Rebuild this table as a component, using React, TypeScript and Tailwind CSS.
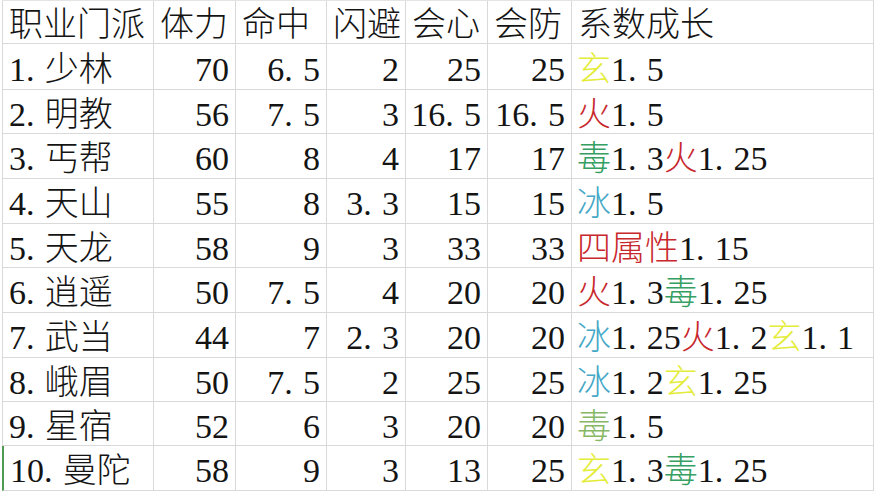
type Seg = { t: string; c?: string };

const YELLOW = "text-[#e4ec3a]";
const RED = "text-[#c8282d]";
const GREEN = "text-[#35a062]";
const LIGHTGREEN = "text-[#86b866]";
const CYAN = "text-[#45a8c8]";

const rows: { name: string; vals: string[]; growth: Seg[] }[] = [
  { name: "1.少林", vals: ["70", "6.5", "2", "25", "25"], growth: [{ t: "玄", c: YELLOW }, { t: "1.5" }] },
  { name: "2.明教", vals: ["56", "7.5", "3", "16.5", "16.5"], growth: [{ t: "火", c: RED }, { t: "1.5" }] },
  {
    name: "3.丐帮",
    vals: ["60", "8", "4", "17", "17"],
    growth: [{ t: "毒", c: GREEN }, { t: "1.3" }, { t: "火", c: RED }, { t: "1.25" }],
  },
  { name: "4.天山", vals: ["55", "8", "3.3", "15", "15"], growth: [{ t: "冰", c: CYAN }, { t: "1.5" }] },
  { name: "5.天龙", vals: ["58", "9", "3", "33", "33"], growth: [{ t: "四属性", c: RED }, { t: "1.15" }] },
  {
    name: "6.逍遥",
    vals: ["50", "7.5", "4", "20", "20"],
    growth: [{ t: "火", c: RED }, { t: "1.3" }, { t: "毒", c: GREEN }, { t: "1.25" }],
  },
  {
    name: "7.武当",
    vals: ["44", "7", "2.3", "20", "20"],
    growth: [{ t: "冰", c: CYAN }, { t: "1.25" }, { t: "火", c: RED }, { t: "1.2" }, { t: "玄", c: YELLOW }, { t: "1.1" }],
  },
  {
    name: "8.峨眉",
    vals: ["50", "7.5", "2", "25", "25"],
    growth: [{ t: "冰", c: CYAN }, { t: "1.2" }, { t: "玄", c: YELLOW }, { t: "1.25" }],
  },
  { name: "9.星宿", vals: ["52", "6", "3", "20", "20"], growth: [{ t: "毒", c: LIGHTGREEN }, { t: "1.5" }] },
  {
    name: "10.曼陀",
    vals: ["58", "9", "3", "13", "25"],
    growth: [{ t: "玄", c: YELLOW }, { t: "1.3" }, { t: "毒", c: GREEN }, { t: "1.25" }],
  },
];

const headers = ["职业门派", "体力", "命中", "闪避", "会心", "会防", "系数成长"];

// SimSun style: the period takes a half-width cell
function Txt({ s }: { s: string }) {
  const parts = s.split(".");
  return (
    <>
      {parts.map((p, i) => (
        <span key={i}>
          {p}
          {i < parts.length - 1 && <span className="inline-block w-[0.55em]">.</span>}
        </span>
      ))}
    </>
  );
}

const cell = "flex items-center border-r border-b border-[#d9d9d9] pt-[6px] whitespace-nowrap";

export default function App() {
  return (
    <div className="h-[494px] w-[874px] overflow-hidden bg-white pl-[2px] font-['Liberation_Serif','Noto_Sans_CJK_SC',serif] text-[34px] font-light leading-none text-[#141414]">
      <div className="grid grid-cols-[152px_82px_91px_79px_82px_84px_1fr] grid-rows-[43px_46px_44px_45px_45px_44px_45px_45px_44px_44px_45px] border-t border-[#e4e4e4]">
        {headers.map((h, i) => (
          <div key={h} className={`${cell} px-[6px] ${i === 0 ? "border-l" : ""}`}>
            {h}
          </div>
        ))}
        {rows.map((r, ri) => (
          <div key={r.name} className="contents">
            <div
              className={`${cell} px-[6px] ${
                ri === rows.length - 1 ? "border-l-2 border-l-[#4f9a52]" : "border-l"
              }`}
            >
              <Txt s={r.name} />
            </div>
            {r.vals.map((v, vi) => (
              <div key={vi} className={`${cell} justify-end px-[6px]`}>
                <Txt s={v} />
              </div>
            ))}
            <div className={`${cell} px-[5px] overflow-visible`}>
              {r.growth.map((g, gi) => (
                <span key={gi} className={g.c ?? ""}>
                  <Txt s={g.t} />
                </span>
              ))}
            </div>
          </div>
        ))}
      </div>
    </div>
  );
}
